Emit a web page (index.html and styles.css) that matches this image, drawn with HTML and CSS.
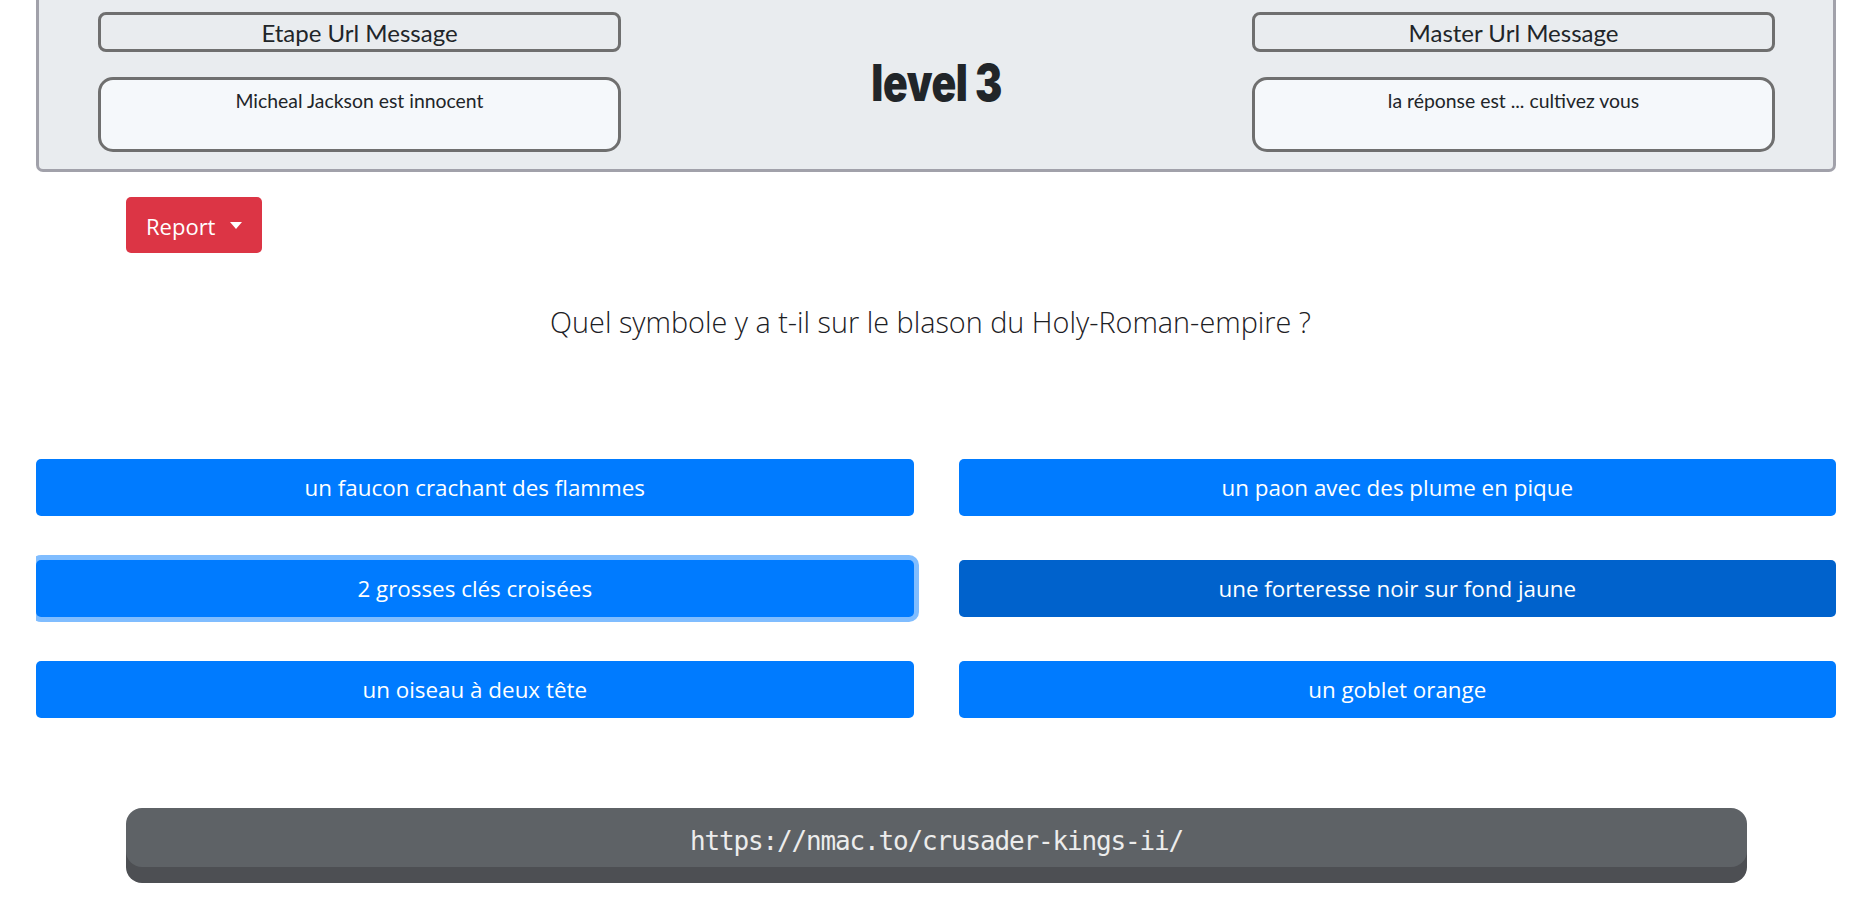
FILE: index.html
```html
<!DOCTYPE html>
<html lang="fr">
<head>
<meta charset="utf-8">
<title>level 3</title>
<link rel="stylesheet" href="styles.css">
</head>
<body>
<div class="panel">
  <div class="side">
    <div class="label">Etape Url Message</div>
    <div class="msg">Micheal Jackson est innocent</div>
  </div>
  <div class="level"><span class="level-text">level 3</span></div>
  <div class="side">
    <div class="label">Master Url Message</div>
    <div class="msg">la réponse est ... cultivez vous</div>
  </div>
</div>

<div class="inner">
  <button class="report">Report<span class="caret"></span></button>
</div>

<p class="question">Quel symbole y a t-il sur le blason du Holy-Roman-empire ?</p>

<div class="answers-wrap">
  <div class="answers">
    <button class="answer">un faucon crachant des flammes</button>
    <button class="answer">un paon avec des plume en pique</button>
    <button class="answer focus">2 grosses clés croisées</button>
    <button class="answer active">une forteresse noir sur fond jaune</button>
    <button class="answer">un oiseau à deux tête</button>
    <button class="answer">un goblet orange</button>
  </div>
</div>

<div class="inner">
  <div class="url">https://nmac.to/crusader-kings-ii/</div>
</div>
</body>
</html>
```

FILE: styles.css
```css
* { box-sizing: border-box; }

html, body {
  margin: 0;
  padding: 0;
  background: #ffffff;
}

body {
  font-family: "Open Sans", "Noto Sans", sans-serif;
  color: #212529;
  width: 1861px;
  padding-bottom: 40px;
}

.panel {
  margin: 0 25px 0 36px;
  background: #e9ecef;
  border: 3px solid #a1a1aa;
  border-top: none;
  border-radius: 0 0 7px 7px;
  padding: 12px 58px 17px 59px;
  display: grid;
  grid-template-columns: 523px 1fr 523px;
}

.side {
  display: flex;
  flex-direction: column;
  gap: 25px;
}

.label {
  height: 40px;
  border: 3px solid #6f6f6f;
  border-radius: 8px;
  display: flex;
  align-items: center;
  justify-content: center;
  font-family: "Lato", sans-serif;
  font-size: 24px;
  color: #212529;
}

.msg {
  height: 75px;
  border: 3px solid #6f6f6f;
  border-radius: 15px;
  background: #f5f8fb;
  padding-top: 7px;
  text-align: center;
  font-family: "Lato", sans-serif;
  font-size: 19.4px;
  line-height: 28px;
  color: #212529;
}

.level {
  display: flex;
  align-items: center;
  justify-content: center;
}

.level-text {
  display: inline-block;
  font-family: "Inter", "Roboto", sans-serif;
  font-weight: 900;
  font-size: 51px;
  line-height: 1;
  letter-spacing: -0.5px;
  color: #212529;
  transform: scaleX(0.8);
}

.inner {
  margin: 0 114px 0 126px;
}

.report {
  margin-top: 25px;
  height: 56px;
  padding: 1px 20px 0 20px;
  border: none;
  border-radius: 5px;
  background: #dc3545;
  color: #ffffff;
  font-family: "Open Sans", sans-serif;
  font-size: 22px;
  display: inline-flex;
  align-items: center;
  cursor: pointer;
}

.caret {
  display: inline-block;
  margin-left: 15px;
  width: 0;
  height: 0;
  border-top: 7px solid #ffffff;
  border-left: 6.5px solid transparent;
  border-right: 6.5px solid transparent;
}

.question {
  margin: 49px 0 0;
  height: 40px;
  line-height: 40px;
  text-align: center;
  font-family: "Open Sans", sans-serif;
  font-weight: 300;
  font-size: 28.8px;
  color: #1c2024;
}

.answers-wrap {
  margin: 111px 20px 0 36px;
  padding: 6px 10px 6px 0;
  overflow: hidden;
}

.answers {
  width: 1800px;
  display: grid;
  grid-template-columns: 1fr 1fr;
  column-gap: 45px;
  row-gap: 44px;
}

.answer {
  height: 57px;
  border: none;
  border-radius: 5px;
  background: #007bff;
  color: #ffffff;
  font-family: "Open Sans", sans-serif;
  font-size: 22.4px;
  cursor: pointer;
}

.answer.focus {
  box-shadow: 0 0 0 5px #80bdff;
}

.answer.active {
  background: #0062cc;
}

.url {
  margin-top: 84px;
  height: 59px;
  border-radius: 16px;
  background: #5e6266;
  box-shadow: 0 16px 0 0 #4d4f53;
  color: #ececec;
  font-family: "DejaVu Sans Mono", "Liberation Mono", monospace;
  font-size: 26px;
  letter-spacing: -1.15px;
  display: flex;
  align-items: center;
  justify-content: center;
  padding-top: 6px;
}
```
